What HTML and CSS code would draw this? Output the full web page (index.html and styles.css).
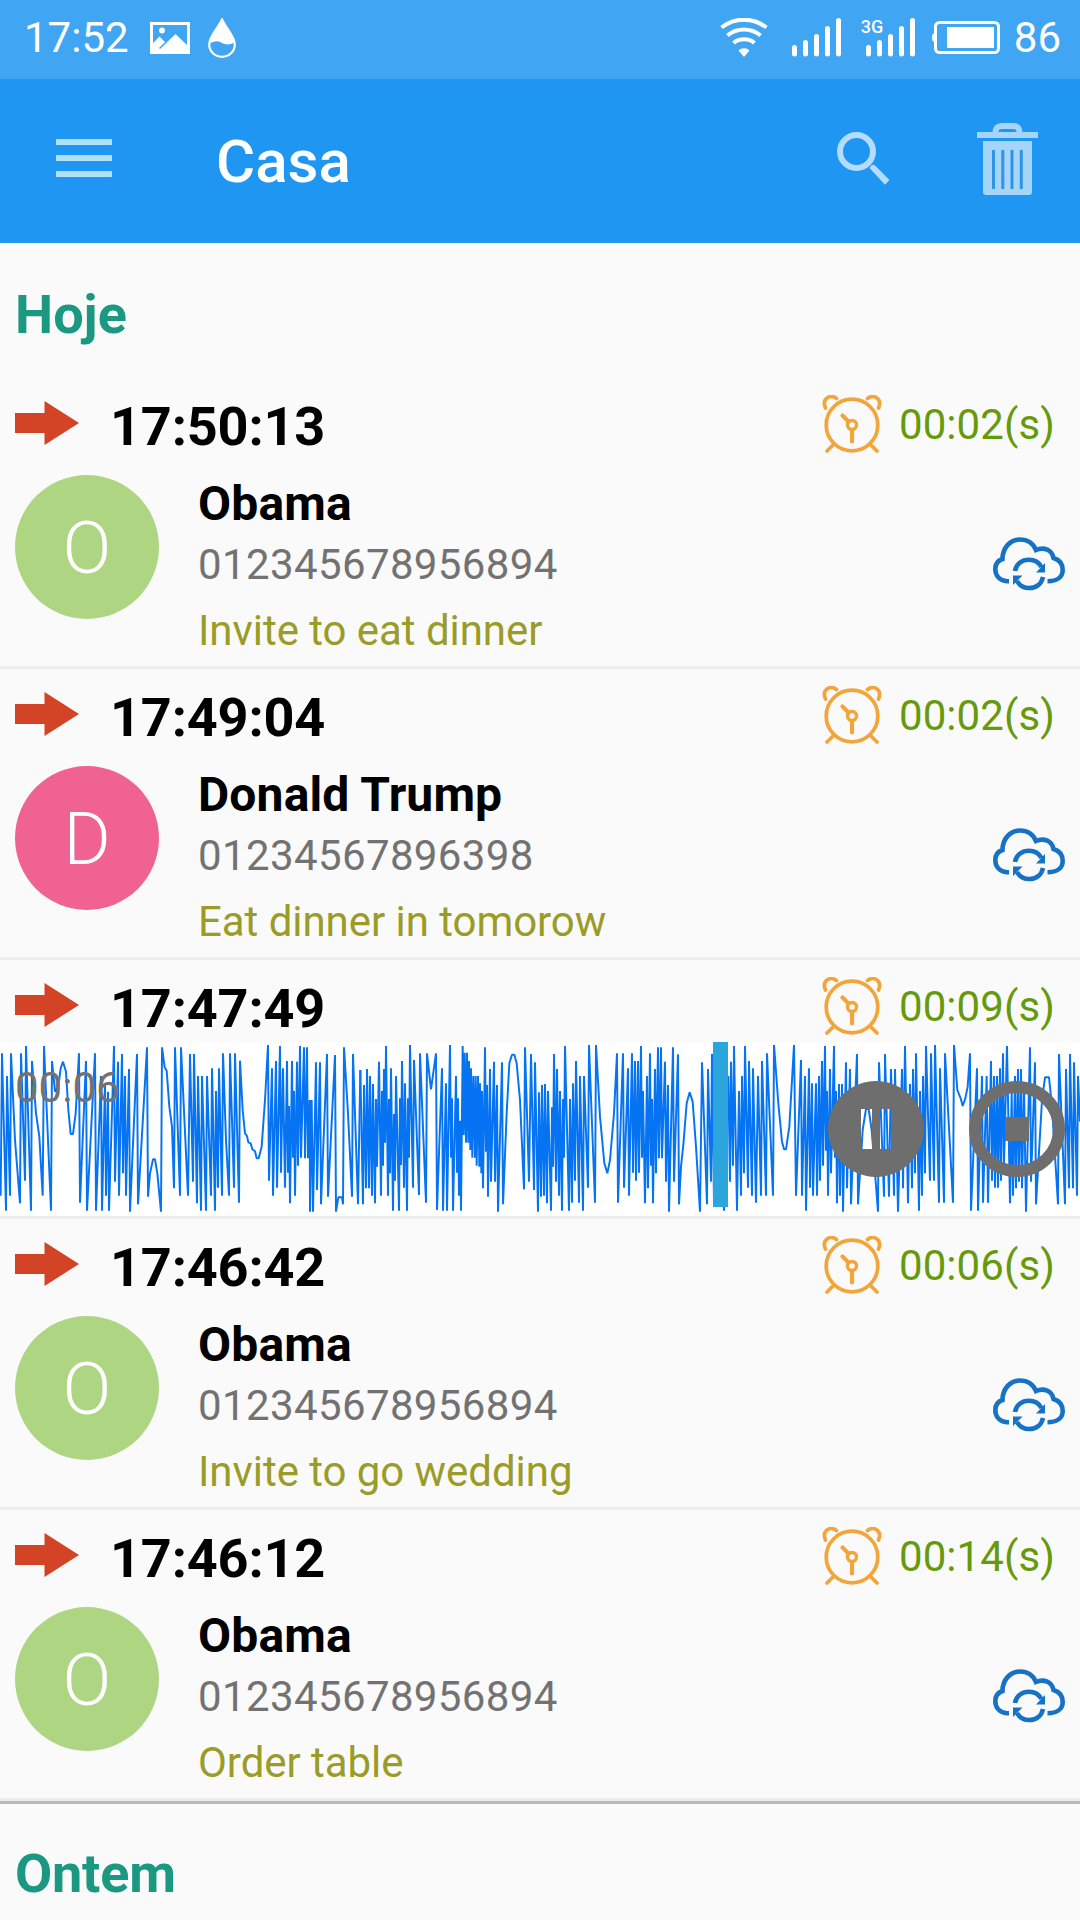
FILE: index.html
```html
<!DOCTYPE html>
<html lang="pt">
<head>
  <meta charset="UTF-8">
  <title>Casa</title>
  <link rel="stylesheet" href="styles.css">
</head>
<body>
  <!-- shared icons -->
  <svg class="defs">
    <symbol id="arrow" viewBox="0 0 64 44">
      <path d="M0 12H29.500V0L64 22L29.500 44V32H0z" fill="#d34427"/>
    </symbol>
    <symbol id="clock" viewBox="0 0 60 58">
      <g fill="none" stroke="#f2a53a" stroke-width="3.700" stroke-linecap="round">
        <circle cx="30" cy="30" r="25.800"/>
        <circle cx="30" cy="30" r="4.500" stroke-width="3.400"/>
        <path d="M30 35V46.500M26.500 26.500L20.500 20.500" stroke-width="4.200"/>
        <path d="M3.500 13C-.5 4 8 -1.500 14.500 3.500M56.500 13C60.500 4 52 -1.500 45.500 3.500"/>
        <path d="M12 49L5 56M48 49L55 56"/>
      </g>
    </symbol>
    <symbol id="cloud" viewBox="0 0 72 54">
      <g fill="none" stroke="#1672c4" stroke-width="4.600">
        <path d="M16 44.300H14C6 43.500 2.300 38 2.300 32C2.300 27 5 23.500 9.500 22C9.500 11 17 2.500 27 2.500C34 2.500 40 6 43 13C51 9.500 59 13 60.500 21C67 23 69.700 28 69.700 33C69.700 40 64 44.300 54.500 44.300"/>
        <path d="M22 34C23 27 29 22.800 36 22.800C42 22.800 46 25.500 48.500 30"/>
        <path d="M50 40C48.500 47 43 51 36.500 51C31 51 26.500 48.500 24 44"/>
      </g>
      <path d="M52 26V35.500H43zM20 48V38.500H29.500z" fill="#1672c4"/>
    </symbol>
  </svg>

  <div class="status-bar">
    <span class="status-time">17:52</span>
    <svg class="icon-image" width="40" height="32" viewBox="0 0 40 32">
      <rect x="1.500" y="1.500" width="37" height="29" fill="none" stroke="#fff" stroke-width="3"/>
      <circle cx="12" cy="8.500" r="2.900" fill="#fff"/>
      <path d="M2 22L9.500 14.500L15 20L9 26L10 27L25.500 12L38 24V31H2z" fill="#fff"/>
    </svg>
    <svg class="icon-drop" width="28" height="40" viewBox="0 0 28 40">
      <path d="M14 1.500C11 9 1.200 18 1.200 26.500C1.200 33.500 7 38.800 14 38.800C21 38.800 26.800 33.500 26.800 26.500C26.800 18 17 9 14 1.500z" fill="none" stroke="#fff" stroke-width="2.200"/>
      <path d="M14 1C11 9 1 18 1 26C7 22 11 23 14 25C18 27 23 27 27 24C26 17 17 9 14 1z" fill="#fff"/>
    </svg>
    <span class="spacer"></span>
    <svg class="icon-wifi" width="48" height="40" viewBox="0 0 48 40">
      <g fill="none" stroke="#fff" stroke-width="4">
        <path d="M1.500 9.500C15 -1 33 -1 46.500 9.500"/>
        <path d="M7.500 17.500C17 9.500 31 9.500 40.500 17.500"/>
        <path d="M13.500 25C19.500 20 28.500 20 34.500 25"/>
      </g>
      <path d="M18.500 32.500C21.500 29.500 26.500 29.500 29.500 32.500L24 39z" fill="#fff"/>
    </svg>
    <svg class="icon-signal" width="50" height="39" viewBox="0 0 50 39">
      <path d="M2.500 29.500V36M13.500 24.500V36M24.500 18.500V36M35.500 10.500V36M46.500 2.500V36" stroke="#fff" stroke-width="5" stroke-linecap="round"/>
    </svg>
    <span class="signal-3g">
      <span class="net">3G</span>
      <svg width="50" height="39" viewBox="0 0 50 39">
        <path d="M2.500 29.500V36M13.500 24.500V36M24.500 18.500V36M35.500 10.500V36M46.500 2.500V36" stroke="#fff" stroke-width="5" stroke-linecap="round"/>
      </svg>
    </span>
    <svg class="icon-battery" width="68" height="33" viewBox="0 0 68 33">
      <rect x="3.500" y="1.500" width="63" height="30" rx="4" fill="none" stroke="#fff" stroke-width="3"/>
      <path d="M3 12Q0 12 0 16.500Q0 21 3 21z" fill="#fff"/>
      <rect x="15" y="6" width="47" height="21" fill="#fff"/>
    </svg>
    <span class="battery-text">86</span>
  </div>

  <div class="app-bar">
    <svg class="icon-menu" width="56" height="38" viewBox="0 0 56 38">
      <path d="M0 3H56M0 19H56M0 35H56" stroke="#b1e0fa" stroke-width="6"/>
    </svg>
    <h1>Casa</h1>
    <span class="spacer"></span>
    <svg class="icon-search" width="53" height="53" viewBox="0 0 53 53">
      <circle cx="19.500" cy="19.500" r="16.500" fill="none" stroke="#b5dcfb" stroke-width="6"/>
      <path d="M32.500 36Q35 31 38 33.500L52.500 48L48 52.800z" fill="#b5dcfb"/>
    </svg>
    <svg class="icon-trash" width="61" height="72" viewBox="0 0 61 72">
      <path d="M18.500 10C18.500 4 21 3 25 3H36C40 3 42.500 4 42.500 10" fill="none" stroke="#a6d5fa" stroke-width="6"/>
      <rect y="9" width="61" height="6" fill="#a6d5fa"/>
      <path d="M6 18H55V69Q55 72 52 72H9Q6 72 6 69z" fill="#a6d5fa"/>
      <path d="M16.500 27V66M25.800 27V66M35 27V66M44.300 27V66" stroke="#2e95e6" stroke-width="3"/>
    </svg>
  </div>

  <h2>Hoje</h2>

  <div class="call">
    <div class="call-head">
      <svg class="arrow"><use href="#arrow"/></svg>
      <span class="time">17:50:13</span>
      <svg class="clock"><use href="#clock"/></svg>
      <span class="duration">00:02(s)</span>
    </div>
    <div class="call-body">
      <div class="avatar green">O</div>
      <div class="info">
        <p class="name">Obama</p>
        <p class="number">012345678956894</p>
        <p class="note">Invite to eat dinner</p>
      </div>
      <svg class="cloud"><use href="#cloud"/></svg>
    </div>
  </div>

  <div class="call">
    <div class="call-head">
      <svg class="arrow"><use href="#arrow"/></svg>
      <span class="time">17:49:04</span>
      <svg class="clock"><use href="#clock"/></svg>
      <span class="duration">00:02(s)</span>
    </div>
    <div class="call-body">
      <div class="avatar pink">D</div>
      <div class="info">
        <p class="name">Donald Trump</p>
        <p class="number">01234567896398</p>
        <p class="note">Eat dinner in tomorow</p>
      </div>
      <svg class="cloud"><use href="#cloud"/></svg>
    </div>
  </div>

  <div class="call">
    <div class="call-head">
      <svg class="arrow"><use href="#arrow"/></svg>
      <span class="time">17:47:49</span>
      <svg class="clock"><use href="#clock"/></svg>
      <span class="duration">00:09(s)</span>
    </div>
    <!-- player for the open recording -->
    <div class="player">
      <svg class="wave" viewBox="0 36 3240 522" preserveAspectRatio="none">
        <g fill="none" stroke="#0674f2" stroke-width="5.900" stroke-linejoin="bevel">
          <polyline points="2,497 6,70 18,542 21,138 30,497 33,70 45,330 60,520 63,70 75,452 78,48 93,542 96,93 108,250 118,320 128,497 132,48 153,542 156,93 165,185 175,170 182,115 189,95 198,125 205,240 212,312 219,312 227,250 237,70 240,518 258,93 261,542 285,70 288,542 303,138 306,542 315,160 318,497 324,185 327,542 342,48 345,455 354,95 357,497 366,72 369,430 375,138 378,497 387,117 390,545 411,72 414,523 441,52 444,500 450,430 459,388 465,388 472,430 483,545 486,52 494,112 500,122 508,230 516,290 522,475 525,52 540,497 543,52 564,497 570,72 579,455 582,72 591,520 594,138 603,542 606,138 618,542 621,138 633,497 636,115 645,542 648,183 654,473 657,115 666,497 669,70 678,330 687,497 690,70 702,473 705,70 717,518 720,92 728,240 735,310 741,318 745,337 752,340 757,358 765,364 770,385 776,385 785,350 795,210 804,45 807,452 816,115 819,497 828,93 831,473 840,48 843,428 849,115 855,473 861,93 864,428 867,228 870,520 876,93 879,383 882,183 885,497 891,95 894,407 900,48 903,383 912,52 915,385 921,52 924,385 929,210 930,545 935,210 939,545 948,97 951,480 960,97 963,523 981,72 984,500 1005,75 1008,545 1015,502 1026,502 1029,523 1032,52 1044,250 1056,500 1059,72 1074,523 1081,120"/>
          <polyline transform="translate(1080)" points="1,120 9,523 12,165 18,475 21,117 27,475 30,138 36,497 39,162 45,520 48,207 51,410 57,95 63,497 66,183 69,407 72,117 75,338 78,48 84,497 87,207 90,430 93,115 99,542 102,252 105,452 108,138 117,542 120,205 123,405 126,93 132,473 135,160 141,542 144,205 147,383 150,45 159,473 162,90 177,495 180,70 198,518 201,70 213,178 228,70 231,540 246,115 249,542 258,160 261,542 270,45 273,383 276,205 279,542 288,138 291,428 294,205 297,497 300,272 303,542 308,48 311,315 314,68 318,338 321,68 325,338 327,93 331,360 333,115 337,383 340,138 345,383 347,138 350,407 354,138 358,410 360,160 364,430 366,183 369,475 375,52 378,365 381,165 384,500 390,117 393,455 402,95 405,455 411,165 414,545 426,97 429,523 440,250 448,100 456,74 463,74 470,100 480,210 492,478 495,52 507,455 513,72 522,480 525,97 534,545 537,187 543,500 546,165 552,497 555,162 561,520 564,183 573,542 576,232 579,410 582,72 588,455 591,117 597,497 600,183 606,542 609,207 612,383 615,48 627,542 630,207 636,518 639,160 645,452 648,93 657,518 660,138 669,542 672,138 684,473 687,45 705,518 708,45 720,260 733,400 742,430 750,390 762,250 771,70 774,518 789,70 792,473 804,115 807,497 816,70 819,428 825,93 828,452 834,93 837,428 843,48 846,383 849,183 855,520 861,138 864,475 870,70 873,407 876,207 879,520 885,117 888,430 894,52 897,385 903,52 906,385 915,95 918,455 924,165 927,545 939,52 942,455 954,73 957,523 963,410 970,345 980,220 989,187 998,215 1008,350 1020,545 1026,97 1041,523 1044,117 1053,455 1056,72 1062,520 1083,70"/>
          <polyline transform="translate(2160)" points="3,70 12,542 25,138 30,455 33,95 39,407 42,48 51,542 57,183 63,497 66,138 72,430 75,48 84,473 87,93 96,497 99,115 108,518 114,138 123,497 126,93 138,497 141,70 159,497 162,45 175,220 186,335 192,358 198,358 208,290 222,45 228,497 243,90 246,497 255,138 258,542 267,115 270,473 276,160 279,497 288,160 291,497 297,138 300,452 306,93 309,407 315,48 318,362 321,183 324,497 330,117 333,430 342,48 345,383 348,183 351,520 357,162 360,497 366,162 369,545 378,97 381,475 390,117 393,523 411,72 414,523 428,300 438,237 446,237 455,300 474,545 477,97 492,500 495,72 507,500 513,117 522,497 525,117 534,545 546,117 549,475 555,48 564,520 570,162 576,475 579,117 585,430 588,70 597,542 600,183 606,497 609,138 615,430 618,48 630,452 633,70 642,452 645,45 657,518 660,115 672,518 675,70 699,518 702,45 712,180 722,205 728,228 736,205 743,170 750,70 753,542 771,115 774,542 786,138 789,518 800,138 804,518 813,93 816,452 822,138 825,473 831,138 834,473 840,115 843,452 849,70 852,400 861,48 870,520 875,185 879,497 885,138 888,475 894,117 897,455 903,117 906,475 912,165 918,545 930,52 933,455 945,97 948,523 966,210 975,142 987,142 996,230 1014,523 1017,72 1035,523 1038,117 1047,475 1050,72 1059,475 1062,97 1071,497 1074,138 1080,275"/>
        </g>
      </svg>
      <div class="playhead"></div>
      <span class="elapsed">00:06</span>
      <div class="controls">
        <svg width="96" height="96" viewBox="0 0 96 96">
          <path fill-rule="evenodd" fill="#6e6e6e" d="M48 0A48 48 0 1 1 48 96A48 48 0 1 1 48 0zM33 28V68H44V28zM52 28V68H63V28z"/>
        </svg>
        <svg width="96" height="96" viewBox="0 0 96 96">
          <circle cx="48" cy="48" r="42" fill="none" stroke="#6e6e6e" stroke-width="12"/>
          <rect x="36" y="36" width="24" height="24" fill="#6e6e6e"/>
        </svg>
      </div>
    </div>
  </div>

  <div class="call">
    <div class="call-head">
      <svg class="arrow"><use href="#arrow"/></svg>
      <span class="time">17:46:42</span>
      <svg class="clock"><use href="#clock"/></svg>
      <span class="duration">00:06(s)</span>
    </div>
    <div class="call-body">
      <div class="avatar green">O</div>
      <div class="info">
        <p class="name">Obama</p>
        <p class="number">012345678956894</p>
        <p class="note">Invite to go wedding</p>
      </div>
      <svg class="cloud"><use href="#cloud"/></svg>
    </div>
  </div>

  <div class="call">
    <div class="call-head">
      <svg class="arrow"><use href="#arrow"/></svg>
      <span class="time">17:46:12</span>
      <svg class="clock"><use href="#clock"/></svg>
      <span class="duration">00:14(s)</span>
    </div>
    <div class="call-body">
      <div class="avatar green">O</div>
      <div class="info">
        <p class="name">Obama</p>
        <p class="number">012345678956894</p>
        <p class="note">Order table</p>
      </div>
      <svg class="cloud"><use href="#cloud"/></svg>
    </div>
  </div>

  <h2 class="next-day">Ontem</h2>
</body>
</html>
```

FILE: styles.css
```css
* { box-sizing: border-box; }
html { background: #fafafa; }
body {
  margin: 0;
  width: 1080px;
  height: 1920px;
  overflow: hidden;
  background: #fafafa;
  font-family: Roboto, sans-serif;
}
h1, h2, p { margin: 0; }
svg { display: block; flex-shrink: 0; }
.defs { display: none; }
.spacer { flex: 1; }

/* Status bar */
.status-bar {
  display: flex;
  height: 79px;
  padding: 0 19px 4px 24px;
  align-items: center;
  background: #40a5f3;
  color: #fff;
  font-size: 42px;
}
.status-time, .battery-text { margin-top: -1px; }
.icon-image { margin-left: 21px; }
.icon-drop { margin-left: 18px; }
.icon-wifi { margin-right: 24px; }
.icon-signal { margin-right: 24px; }
.signal-3g { position: relative; margin-right: 16px; }
.net {
  position: absolute;
  left: -5px;
  top: 0;
  font-size: 18px;
  line-height: 17px;
  font-weight: 500;
}
.icon-battery { margin-right: 14px; }

/* App bar */
.app-bar {
  display: flex;
  height: 164px;
  padding: 0 42px 0 56px;
  align-items: center;
  background: #2096f3;
  color: #fff;
}
.icon-menu { margin-top: -6px; }
h1 {
  margin-left: 104px;
  font-size: 60px;
  font-weight: 500;
}
.icon-search { margin: -6px 87px 0 0; }
.icon-trash { margin-top: -4px; }

/* Day headers */
h2 {
  height: 135px;
  padding: 40px 15px 0;
  color: #1a9881;
  font-size: 54px;
  line-height: 64px;
  font-weight: 700;
}
.next-day {
  padding-top: 38px;
  border-top: 3px solid #b8b9bb;
  letter-spacing: -0.2px;
}

/* Call rows */
.call { border-bottom: 3px solid #eee; }
.call-head {
  display: flex;
  height: 82px;
  padding: 8px 25px 0 15px;
  align-items: center;
}
.arrow { width: 64px; height: 44px; }
.time {
  flex: 1;
  margin-left: 31px;
  padding-top: 6px;
  font-size: 54px;
  font-weight: 700;
  letter-spacing: -0.15px;
}
.clock { width: 60px; height: 58px; margin-top: 1px; }
.duration {
  margin-left: 17px;
  padding-top: 3px;
  color: #669a0c;
  font-size: 42px;
  letter-spacing: 0.1px;
}
.call-body {
  display: flex;
  height: 206px;
  padding: 15px 15px 0;
}
.avatar {
  width: 144px;
  height: 144px;
  border-radius: 50%;
  color: #fff;
  font-size: 72px;
  font-weight: 300;
  line-height: 147px;
  text-align: center;
}
.green { background: #aed581; }
.pink { background: #f06292; }
.info { flex: 1; margin-left: 39px; padding-top: 1px; }
.name {
  font-size: 48px;
  line-height: 56px;
  font-weight: 700;
  letter-spacing: 0.15px;
}
.number {
  margin-top: 8px;
  color: #727272;
  font-size: 42px;
  line-height: 50px;
  letter-spacing: 0.38px;
}
.note {
  margin-top: 16px;
  color: #9a9c27;
  font-size: 42px;
  line-height: 50px;
  letter-spacing: -0.05px;
}
.cloud { width: 72px; height: 54px; margin-top: 62px; }

/* Player */
.player {
  position: relative;
  height: 174px;
  background: #fff;
}
.wave { width: 1080px; height: 174px; }
.playhead {
  position: absolute;
  left: 713px;
  top: 0;
  width: 15px;
  height: 165px;
  background: #2ca5dd;
}
.elapsed {
  position: absolute;
  left: 15px;
  top: 21px;
  color: #727272;
  font-size: 42px;
  line-height: 50px;
}
.controls {
  position: absolute;
  right: 15px;
  top: 39px;
  display: flex;
  gap: 45px;
}
```
